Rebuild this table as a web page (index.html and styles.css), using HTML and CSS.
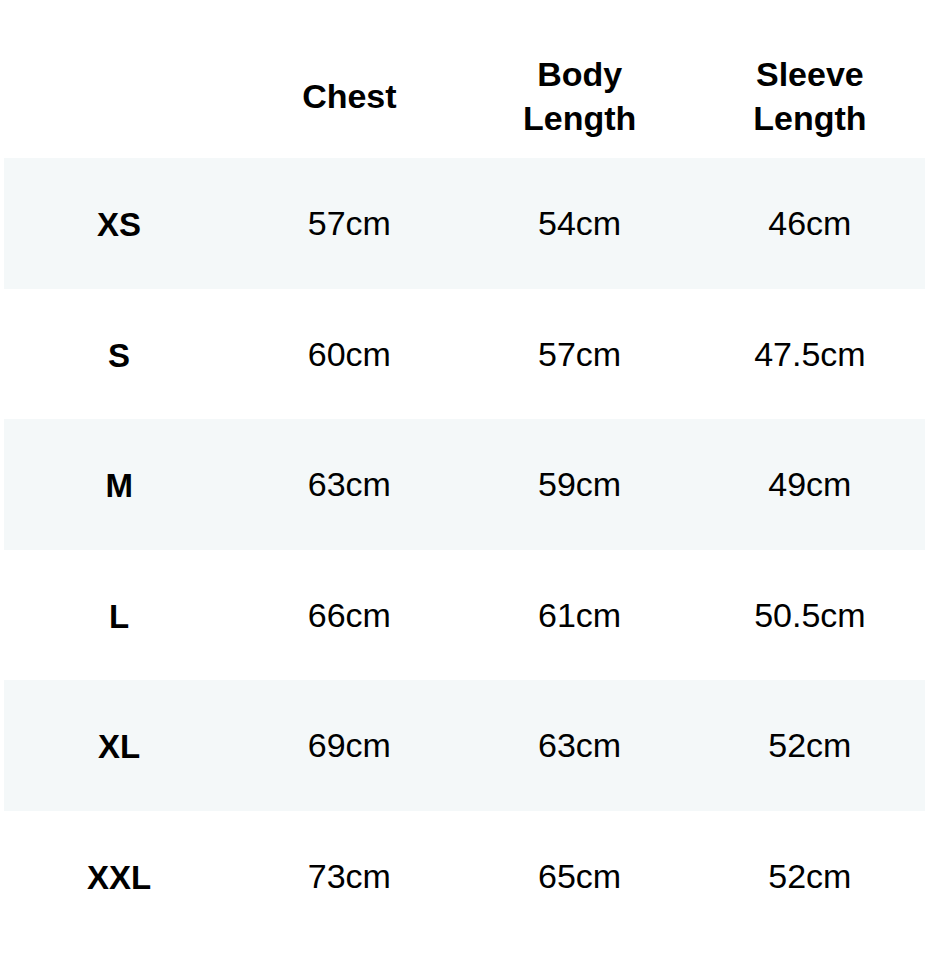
FILE: index.html
```html
<!DOCTYPE html>
<html>
<head>
<meta charset="utf-8">
<link rel="stylesheet" href="styles.css">
</head>
<body>
<div class="chart">
  <div class="row head">
    <div class="cell"></div>
    <div class="cell">Chest</div>
    <div class="cell">Body<br>Length</div>
    <div class="cell">Sleeve<br>Length</div>
  </div>
  <div class="row alt"><div class="cell size">XS</div><div class="cell">57cm</div><div class="cell">54cm</div><div class="cell">46cm</div></div>
  <div class="row"><div class="cell size">S</div><div class="cell">60cm</div><div class="cell">57cm</div><div class="cell">47.5cm</div></div>
  <div class="row alt"><div class="cell size">M</div><div class="cell">63cm</div><div class="cell">59cm</div><div class="cell">49cm</div></div>
  <div class="row"><div class="cell size">L</div><div class="cell">66cm</div><div class="cell">61cm</div><div class="cell">50.5cm</div></div>
  <div class="row alt"><div class="cell size">XL</div><div class="cell">69cm</div><div class="cell">63cm</div><div class="cell">52cm</div></div>
  <div class="row"><div class="cell size">XXL</div><div class="cell">73cm</div><div class="cell">65cm</div><div class="cell">52cm</div></div>
</div>
</body>
</html>
```
FILE: styles.css
```css
html, body {
  margin: 0;
  padding: 0;
  background: #ffffff;
}
body {
  font-family: "Liberation Sans", Arial, Helvetica, sans-serif;
  color: #000000;
}
.chart {
  width: 921px;
  margin-left: 4px;
  padding-top: 34px;
}
.row {
  display: grid;
  grid-template-columns: repeat(4, 1fr);
  height: 130.5px;
  align-items: center;
}
.row.head {
  height: 124px;
}
.row.alt {
  background: #f4f8f9;
}
.cell {
  text-align: center;
  font-size: 34px;
  line-height: 44px;
}
.head .cell {
  font-weight: bold;
}
.size {
  font-weight: bold;
  font-size: 33px;
  padding-top: 4px;
}
```
